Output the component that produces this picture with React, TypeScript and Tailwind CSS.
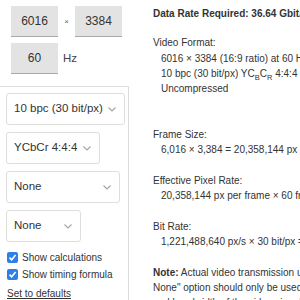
import React from 'react';

const selects = [
  { label: '10 bpc (30 bit/px)', w: 'w-[119px]' },
  { label: 'YCbCr 4:4:4', w: 'w-[94px]' },
  { label: 'None', w: 'w-[114px]' },
  { label: 'None', w: 'w-[75px]' },
];

function Chevron() {
  return (
    <svg width="8" height="5" viewBox="0 0 8 5" className="shrink-0">
      <path d="M0.5 0.5 L4 4 L7.5 0.5" fill="none" stroke="#a3a3a3" strokeWidth="1.1" />
    </svg>
  );
}

function Check() {
  return (
    <span className="w-[11px] h-[11px] rounded-[2px] bg-[#2f7fe8] flex items-center justify-center shrink-0">
      <svg width="9" height="9" viewBox="0 0 9 9">
        <path d="M1.5 4.6 L3.6 6.7 L7.6 2" fill="none" stroke="#fff" strokeWidth="1.6" />
      </svg>
    </span>
  );
}

function NumBox({ value }: { value: string }) {
  return (
    <div className="w-[47px] h-[31px] bg-[#e3e3e3] border-b-[1.5px] border-[#a9a9b0] flex items-center justify-center text-[12px] text-[#333]">
      {value}
    </div>
  );
}

export default function App() {
  return (
    <div className="w-[300px] h-[300px] overflow-hidden bg-white flex font-['Liberation_Sans',Arial,sans-serif] text-[#333]">
      {/* left column */}
      <div className="w-[129px] shrink-0 flex flex-col">
        <div className="pl-[11px] pt-[6px] flex flex-col gap-[6px]">
          <div className="flex items-center">
            <NumBox value="6016" />
            <span className="w-[17px] text-center text-[8px] text-[#666]">×</span>
            <NumBox value="3384" />
          </div>
          <div className="flex items-center">
            <NumBox value="60" />
            <span className="ml-[5px] text-[11.5px] text-[#444]">Hz</span>
          </div>
        </div>

        <div className="mt-[12px] flex-1 border-t border-r border-[#dcdcdc] pl-[6px] pt-[6px] flex flex-col">
          <div className="flex flex-col gap-[7px]">
            {selects.map((s, i) => (
              <div
                key={i}
                className={`${s.w} h-[32px] border border-[#dedede] rounded-[3px] flex items-center justify-between pl-[7px] pr-[8px] text-[11.5px] text-[#333]`}
              >
                <span className="whitespace-nowrap">{s.label}</span>
                <Chevron />
              </div>
            ))}
          </div>
          <div className="mt-[10px] flex flex-col gap-[6px] text-[10px] leading-[11px] text-[#333]">
            <label className="h-[11px] flex items-center gap-[4px] pl-[1px] whitespace-nowrap">
              <Check />
              Show calculations
            </label>
            <label className="h-[11px] flex items-center gap-[4px] pl-[1px] whitespace-nowrap">
              <Check />
              Show timing formula
            </label>
          </div>
          <a className="mt-[8px] pl-[1px] text-[10px] leading-[12px] text-[#333] underline whitespace-nowrap">
            Set to defaults
          </a>
        </div>
      </div>

      {/* right column */}
      <div className="pl-[24px] pt-[6px] text-[10px] leading-[15.3px] whitespace-nowrap">
        <p className="font-bold mb-[14px]">Data Rate Required: 36.64 Gbit/s</p>
        <p>Video Format:</p>
        <div className="pl-[8px] mb-[30.6px]">
          <p>6016 × 3384 (16:9 ratio) at 60 Hz</p>
          <p>
            10 bpc (30 bit/px) YC<sub className="text-[7.5px] align-[-1.5px]">B</sub>C
            <sub className="text-[7.5px] align-[-1.5px]">R</sub> 4:4:4
          </p>
          <p>Uncompressed</p>
        </div>
        <p>Frame Size:</p>
        <p className="pl-[8px] mb-[15.3px]">6,016 × 3,384 = 20,358,144 px</p>
        <p>Effective Pixel Rate:</p>
        <p className="pl-[8px] mb-[15.3px]">20,358,144 px per frame × 60 frame/s = 1,221,488,640 px/s</p>
        <p>Bit Rate:</p>
        <p className="pl-[8px] mb-[15.3px]">1,221,488,640 px/s × 30 bit/px = 36.64 Gbit/s</p>
        <p>
          <b>Note:</b> Actual video transmission uses additional blanking intervals. The "Compression:
        </p>
        <p>None" option should only be used to estimate the raw data rate.</p>
        <p>and bandwidth of the video signal itself.</p>
      </div>
    </div>
  );
}
